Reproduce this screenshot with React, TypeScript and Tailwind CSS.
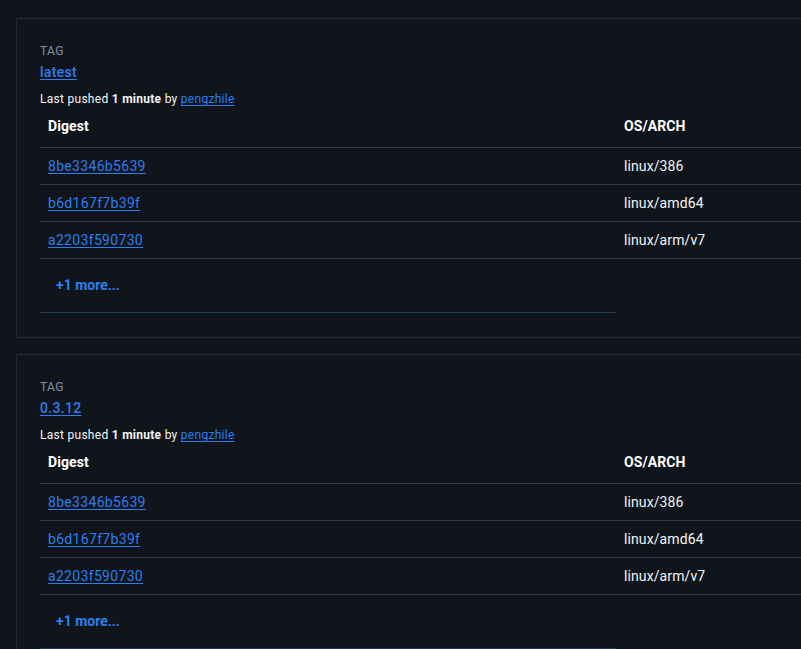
import React from "react";

type Row = { digest: string; arch: string };

const rows: Row[] = [
  { digest: "8be3346b5639", arch: "linux/386" },
  { digest: "b6d167f7b39f", arch: "linux/amd64" },
  { digest: "a2203f590730", arch: "linux/arm/v7" },
];

function TagCard({ tag }: { tag: string }) {
  return (
    <div className="w-[1200px] border border-[#222a32] bg-[#10151c] pt-[24px] pb-[24px] pl-[23px]">
      <div className="text-[12px] leading-[16px] text-[#7f93a6] tracking-[0.4px]">TAG</div>
      <a className="mt-[3px] block w-fit text-[14px] leading-[20px] font-medium tracking-[0.3px] text-[#2b7ff2] underline underline-offset-2">
        {tag}
      </a>
      <div className="mt-[9px] text-[12px] leading-[16px] tracking-[0.28px] text-[#f2f4f6]">
        Last pushed <span className="font-bold">1 minute</span> by{" "}
        <a className="text-[#2b7ff2] underline underline-offset-2">pengzhile</a>
      </div>
      <div className="flex h-[41px] items-center pb-[1px] border-b border-[#2b3843] text-[14px] font-bold tracking-[0.1px] text-white">
        <div className="w-[576px] pl-[8px]">Digest</div>
        <div className="pl-[8px]">OS/ARCH</div>
      </div>
      {rows.map((r) => (
        <div
          key={r.digest}
          className="flex h-[37px] items-center border-b border-[#2b3843] text-[14px]"
        >
          <div className="w-[576px] pl-[8px]">
            <a className="tracking-[0.32px] text-[#2b7ff2] underline underline-offset-2">{r.digest}</a>
          </div>
          <div className="pl-[8px] tracking-[0.1px] text-[#f2f4f6]">{r.arch}</div>
        </div>
      ))}
      <div className="flex h-[54px] w-[576px] items-center border-b border-[#24394a] pl-[16px]">
        <span className="text-[14px] font-bold text-[#2b7ff2]">+1 more...</span>
      </div>
    </div>
  );
}

export default function App() {
  return (
    <div
      className="min-h-[649px] w-full overflow-hidden bg-[#10151c] pl-[16px] pt-[18px]"
      style={{ fontFamily: "Roboto, 'Noto Sans', Arial, sans-serif" }}
    >
      <div className="flex flex-col gap-[16px]">
        <TagCard tag="latest" />
        <TagCard tag="0.3.12" />
      </div>
    </div>
  );
}
